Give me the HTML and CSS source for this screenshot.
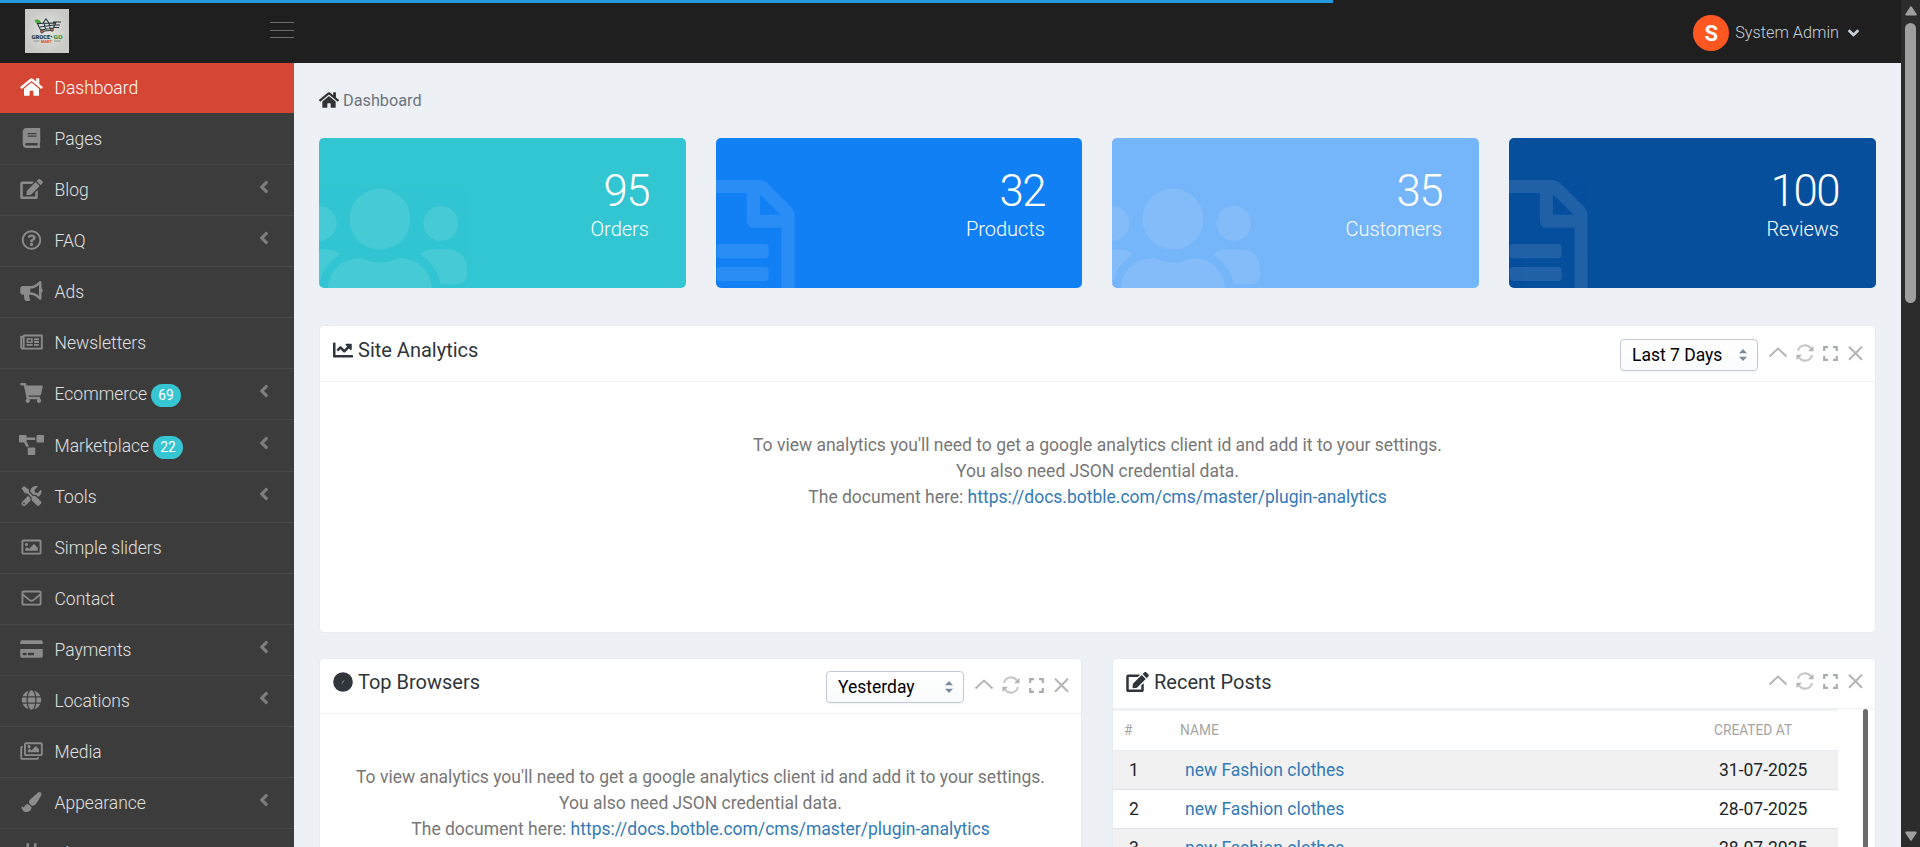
FILE: index.html
```html
<!DOCTYPE html>
<html lang="en">
<head>
<meta charset="utf-8">
<title>Dashboard</title>
<link rel="stylesheet" href="styles.css">
</head>
<body>
<svg class="sprite" aria-hidden="true">
  <symbol id="home" viewBox="0 0 576 512"><path d="M280.37 148.26L96 300.11V464a16 16 0 0 0 16 16l112.06-.29a16 16 0 0 0 15.92-16V368a16 16 0 0 1 16-16h64a16 16 0 0 1 16 16v95.64a16 16 0 0 0 16 16.05L464 480a16 16 0 0 0 16-16V300L295.67 148.26a12.19 12.19 0 0 0-15.3 0zM571.6 251.47L488 182.56V44.05a12 12 0 0 0-12-12h-56a12 12 0 0 0-12 12v72.61L318.47 43a48 48 0 0 0-61 0L4.34 251.47a12 12 0 0 0-1.6 16.9l25.5 31A12 12 0 0 0 45.15 301l235.22-193.74a12.19 12.19 0 0 1 15.3 0L530.9 301a12 12 0 0 0 16.9-1.6l25.5-31a12 12 0 0 0-1.7-16.93z"/></symbol>
  <symbol id="book" viewBox="0 0 448 512"><path d="M448 360V24c0-13.3-10.7-24-24-24H96C43 0 0 43 0 96v320c0 53 43 96 96 96h328c13.3 0 24-10.7 24-24v-16c0-7.5-3.5-14.3-8.9-18.7-4.2-15.4-4.2-59.3 0-74.7 5.4-4.3 8.9-11.1 8.9-18.6zM128 134c0-3.3 2.7-6 6-6h212c3.3 0 6 2.7 6 6v20c0 3.3-2.7 6-6 6H134c-3.3 0-6-2.7-6-6v-20zm0 64c0-3.3 2.7-6 6-6h212c3.3 0 6 2.7 6 6v20c0 3.3-2.7 6-6 6H134c-3.3 0-6-2.7-6-6v-20zm253.4 250H96c-17.7 0-32-14.3-32-32 0-17.6 14.4-32 32-32h285.4c-1.9 17.1-1.9 46.9 0 64z"/></symbol>
  <symbol id="edit" viewBox="0 0 576 512"><path d="M402.6 83.2l90.2 90.2c3.8 3.8 3.8 10 0 13.8L274.4 405.6l-92.8 10.3c-12.4 1.4-22.9-9.1-21.5-21.5l10.3-92.8L388.8 83.2c3.8-3.8 10-3.8 13.8 0zm162-22.9l-48.8-48.8c-15.2-15.2-39.9-15.2-55.2 0l-35.4 35.4c-3.8 3.8-3.8 10 0 13.8l90.2 90.2c3.8 3.8 10 3.8 13.8 0l35.4-35.4c15.2-15.3 15.2-40 0-55.2zM384 346.2V448H64V128h229.8c3.2 0 6.2-1.3 8.5-3.5l40-40c7.6-7.6 2.2-20.5-8.5-20.5H48C21.5 64 0 85.5 0 112v352c0 26.5 21.5 48 48 48h352c26.5 0 48-21.5 48-48V306.2c0-10.7-12.9-16-20.5-8.5l-40 40c-2.2 2.3-3.5 5.3-3.5 8.5z"/></symbol>
  <symbol id="question" viewBox="0 0 512 512"><path d="M256 8C119.043 8 8 119.083 8 256c0 136.997 111.043 248 248 248s248-111.003 248-248C504 119.083 392.957 8 256 8zm0 448c-110.532 0-200-89.431-200-200 0-110.495 89.472-200 200-200 110.491 0 200 89.471 200 200 0 110.53-89.431 200-200 200zm107.244-255.2c0 67.052-72.421 68.084-72.421 92.863V300c0 6.627-5.373 12-12 12h-45.647c-6.627 0-12-5.373-12-12v-8.659c0-35.745 27.1-50.034 47.579-61.516 17.561-9.845 28.324-16.541 28.324-29.579 0-17.246-21.999-28.693-39.784-28.693-23.189 0-33.894 10.977-48.942 29.969-4.057 5.12-11.46 6.071-16.666 2.124l-27.824-21.098c-5.107-3.872-6.251-11.066-2.644-16.363C184.846 131.491 214.94 112 261.794 112c49.071 0 101.45 38.304 101.45 88.8zM298 368c0 23.159-18.841 42-42 42s-42-18.841-42-42 18.841-42 42-42 42 18.841 42 42z"/></symbol>
  <symbol id="bullhorn" viewBox="0 0 576 512"><path d="M576 240c0-23.63-12.95-44.04-32-55.12V32.01C544 23.26 537.02 0 512 0c-7.12 0-14.19 2.38-19.98 7.02l-85.03 68.03C364.28 109.19 310.66 128 256 128H64c-35.35 0-64 28.65-64 64v96c0 35.35 28.65 64 64 64h33.7c-1.39 10.48-2.18 21.14-2.18 32 0 39.77 9.26 77.35 25.56 110.94 5.19 10.69 16.52 17.06 28.4 17.06h74.28c26.05 0 41.69-29.84 25.9-50.56-16.4-21.52-26.15-48.36-26.15-77.44 0-11.11 1.62-21.79 4.41-32H256c54.66 0 108.28 18.81 150.98 52.95l85.03 68.03a32.023 32.023 0 0 0 19.98 7.02c24.92 0 32-22.78 32-32V295.13C563.05 284.04 576 263.63 576 240zm-96 141.42l-33.05-26.44C392.95 311.78 325.12 288 256 288v-96c69.12 0 136.95-23.78 190.95-66.98L480 98.58v282.84z"/></symbol>
  <symbol id="newspaper" viewBox="0 0 576 512"><path d="M552 64H112c-20.858 0-38.643 13.377-45.248 32H24c-13.255 0-24 10.745-24 24v272c0 30.928 25.072 56 56 56h496c13.255 0 24-10.745 24-24V88c0-13.255-10.745-24-24-24zM48 392V144h16v248c0 4.411-3.589 8-8 8s-8-3.589-8-8zm480 8H111.422c.374-2.614.578-5.283.578-8V112h416v288zM172 280h136c6.627 0 12-5.373 12-12v-96c0-6.627-5.373-12-12-12H172c-6.627 0-12 5.373-12 12v96c0 6.627 5.373 12 12 12zm28-80h80v40h-80v-40zm-40 140v-24c0-6.627 5.373-12 12-12h136c6.627 0 12 5.373 12 12v24c0 6.627-5.373 12-12 12H172c-6.627 0-12-5.373-12-12zm192 0v-24c0-6.627 5.373-12 12-12h104c6.627 0 12 5.373 12 12v24c0 6.627-5.373 12-12 12H364c-6.627 0-12-5.373-12-12zm0-144v-24c0-6.627 5.373-12 12-12h104c6.627 0 12 5.373 12 12v24c0 6.627-5.373 12-12 12H364c-6.627 0-12-5.373-12-12zm0 72v-24c0-6.627 5.373-12 12-12h104c6.627 0 12 5.373 12 12v24c0 6.627-5.373 12-12 12H364c-6.627 0-12-5.373-12-12z"/></symbol>
  <symbol id="cart" viewBox="0 0 576 512"><path d="M528.12 301.319l47.273-208C578.806 78.301 567.391 64 551.99 64H159.208l-9.166-44.81C147.758 8.021 137.93 0 126.529 0H24C10.745 0 0 10.745 0 24v16c0 13.255 10.745 24 24 24h69.883l70.248 343.435C147.325 417.1 136 435.222 136 456c0 30.928 25.072 56 56 56s56-25.072 56-56c0-15.674-6.447-29.835-16.824-40h209.647C430.447 426.165 424 440.326 424 456c0 30.928 25.072 56 56 56s56-25.072 56-56c0-22.172-12.888-41.332-31.579-50.405l5.517-24.276c3.413-15.018-8.002-29.319-23.403-29.319H218.117l-6.545-32h293.145c11.206 0 20.92-7.754 23.403-18.681z"/></symbol>
  <symbol id="diagram" viewBox="0 0 640 512"><path d="M384 320H256c-17.67 0-32 14.33-32 32v128c0 17.67 14.33 32 32 32h128c17.67 0 32-14.33 32-32V352c0-17.67-14.33-32-32-32zM192 32c0-17.67-14.33-32-32-32H32C14.33 0 0 14.33 0 32v128c0 17.67 14.33 32 32 32h95.72l73.16 128.04C211.98 300.98 232.4 288 256 288h.28L192 175.51V128h224V64H192V32zM608 0H480c-17.67 0-32 14.33-32 32v128c0 17.67 14.33 32 32 32h128c17.67 0 32-14.33 32-32V32c0-17.67-14.33-32-32-32z"/></symbol>
  <symbol id="tools" viewBox="0 0 512 512"><path d="M501.1 395.7L384 278.6c-23.1-23.1-57.6-27.6-85.4-13.9L192 158.1V96L64 0 0 64l96 128h62.1l106.6 106.6c-13.6 27.8-9.2 62.3 13.9 85.4l117.1 117.1c14.6 14.6 38.2 14.6 52.7 0l52.7-52.7c14.5-14.6 14.5-38.2 0-52.7zM331.7 225c28.3 0 54.9 11 74.9 31l19.4 19.4c15.8-6.9 30.8-16.5 43.8-29.5 37.1-37.1 49.7-89.3 37.9-136.7-2.2-9-13.5-12.1-20.1-5.5l-74.4 74.4-67.9-11.3L334 98.9l74.4-74.4c6.6-6.6 3.4-17.9-5.7-20.2-47.4-11.7-99.6.9-136.6 37.9-28.5 28.5-41.9 66.1-41.2 103.6l82.1 82.1c8.1-1.9 16.5-2.9 24.7-2.9zm-103.9 82l-56.7-56.7L18.7 402.8c-25 25-25 65.5 0 90.5s65.5 25 90.5 0l123.6-123.6c-7.6-19.9-9.9-41.6-5-62.7zM64 472c-13.2 0-24-10.8-24-24 0-13.3 10.7-24 24-24s24 10.7 24 24c0 13.2-10.7 24-24 24z"/></symbol>
  <symbol id="image" viewBox="0 0 512 512"><path d="M464 64H48C21.49 64 0 85.49 0 112v288c0 26.51 21.49 48 48 48h416c26.51 0 48-21.49 48-48V112c0-26.51-21.49-48-48-48zm-6 336H54a6 6 0 0 1-6-6V118a6 6 0 0 1 6-6h404a6 6 0 0 1 6 6v276a6 6 0 0 1-6 6zM128 152c-22.091 0-40 17.909-40 40s17.909 40 40 40 40-17.909 40-40-17.909-40-40-40zM96 352h320v-80l-87.515-87.515c-4.686-4.686-12.284-4.686-16.971 0L192 304l-39.515-39.515c-4.686-4.686-12.284-4.686-16.971 0L96 304v48z"/></symbol>
  <symbol id="envelope" viewBox="0 0 512 512"><path d="M464 64H48C21.49 64 0 85.49 0 112v288c0 26.51 21.49 48 48 48h416c26.51 0 48-21.49 48-48V112c0-26.51-21.49-48-48-48zm0 48v40.805c-22.422 18.259-58.168 46.651-134.587 106.49-16.841 13.247-50.201 45.072-73.413 44.701-23.208.375-56.579-31.459-73.413-44.701C106.18 199.465 70.425 171.067 48 152.805V112h416zM48 400V214.398c22.914 18.251 55.409 43.862 104.938 82.646 21.857 17.205 60.134 55.186 103.062 54.955 42.717.231 80.509-37.199 103.053-54.947 49.528-38.783 82.032-64.401 104.947-82.653V400H48z"/></symbol>
  <symbol id="card" viewBox="0 0 576 512"><path d="M0 432c0 26.5 21.5 48 48 48h480c26.5 0 48-21.5 48-48V256H0v176zm192-68c0-6.6 5.4-12 12-12h136c6.6 0 12 5.4 12 12v40c0 6.6-5.4 12-12 12H204c-6.6 0-12-5.4-12-12v-40zm-128 0c0-6.6 5.4-12 12-12h72c6.6 0 12 5.4 12 12v40c0 6.6-5.4 12-12 12H76c-6.6 0-12-5.4-12-12v-40zM576 80v48H0V80c0-26.5 21.5-48 48-48h480c26.5 0 48 21.5 48 48z"/></symbol>
  <symbol id="globe" viewBox="0 0 496 512"><path d="M336.5 160C322 70.7 287.8 8 248 8s-74 62.7-88.5 152h177zM152 256c0 22.2 1.2 43.5 3.3 64h185.3c2.1-20.5 3.3-41.8 3.3-64s-1.2-43.5-3.3-64H155.3c-2.1 20.5-3.3 41.8-3.3 64zm324.7-96c-28.6-67.9-86.5-120.4-158-141.6 24.4 33.8 41.2 84.7 50 141.6h108zM177.2 18.4C105.8 39.6 47.8 92.1 19.3 160h108c8.7-56.9 25.5-107.8 49.9-141.6zM487.4 192H372.7c2.1 21 3.3 42.5 3.3 64s-1.2 43-3.3 64h114.6c5.5-20.5 8.6-41.8 8.6-64s-3.1-43.5-8.5-64zM120 256c0-21.5 1.2-43 3.3-64H8.6C3.2 212.5 0 233.8 0 256s3.2 43.5 8.6 64h114.6c-2-21-3.2-42.5-3.2-64zm39.5 96c14.5 89.3 48.7 152 88.5 152s74-62.7 88.5-152h-177zm159.3 141.6c71.4-21.2 129.4-73.7 158-141.6h-108c-8.8 56.9-25.6 107.8-50 141.6zM19.3 352c28.6 67.9 86.5 120.4 158 141.6-24.4-33.8-41.2-84.7-50-141.6h-108z"/></symbol>
  <symbol id="images" viewBox="0 0 576 512"><path d="M480 416v16c0 26.51-21.49 48-48 48H48c-26.51 0-48-21.49-48-48V176c0-26.51 21.49-48 48-48h16v48H54a6 6 0 0 0-6 6v244a6 6 0 0 0 6 6h372a6 6 0 0 0 6-6v-10h48zm42-336H150a6 6 0 0 0-6 6v244a6 6 0 0 0 6 6h372a6 6 0 0 0 6-6V86a6 6 0 0 0-6-6zm6-48c26.51 0 48 21.49 48 48v256c0 26.51-21.49 48-48 48H144c-26.51 0-48-21.49-48-48V80c0-26.51 21.49-48 48-48h384zM264 144c0 22.091-17.909 40-40 40s-40-17.909-40-40 17.909-40 40-40 40 17.909 40 40zm-72 96l39.515-39.515c4.686-4.686 12.284-4.686 16.971 0L288 240l103.515-103.515c4.686-4.686 12.284-4.686 16.971 0L480 208v80H192v-48z"/></symbol>
  <symbol id="brush" viewBox="0 0 512 512"><path d="M167.02 309.34c-40.12 2.58-76.53 17.86-97.19 72.3-2.35 6.21-8 9.98-14.59 9.98-11.11 0-45.46-27.67-55.25-34.35C0 439.62 37.93 512 128 512c75.86 0 128-43.77 128-120.19 0-3.11-.65-6.08-.97-9.13l-88.01-73.34zM457.89 0c-15.16 0-29.37 6.71-40.21 16.45C213.27 199.05 192 203.34 192 257.09c0 13.7 3.25 26.76 8.73 38.7l63.82 53.18c7.21 1.8 14.64 3.03 22.39 3.03 62.11 0 98.11-45.47 211.16-256.46 7.38-14.35 13.9-29.85 13.9-45.99C512 20.64 486 0 457.89 0z"/></symbol>
  <symbol id="plug" viewBox="0 0 384 512"><path d="M320,32a32,32,0,0,0-64,0v96h64Zm48,128H16A16,16,0,0,0,0,176v32a16,16,0,0,0,16,16H32v32A160.07,160.07,0,0,0,160,412.8V512h64V412.8A160.07,160.07,0,0,0,352,256V224h16a16,16,0,0,0,16-16V176A16,16,0,0,0,368,160ZM128,32a32,32,0,0,0-64,0v96h64Z"/></symbol>
  <symbol id="users" viewBox="0 0 640 512"><path d="M96 224c35.3 0 64-28.7 64-64s-28.7-64-64-64-64 28.7-64 64 28.7 64 64 64zm448 0c35.3 0 64-28.7 64-64s-28.7-64-64-64-64 28.7-64 64 28.7 64 64 64zm32 32h-64c-17.6 0-33.5 7.1-45.1 18.6 40.3 22.1 68.9 62 75.1 109.4h66c17.7 0 32-14.3 32-32v-32c0-35.3-28.7-64-64-64zm-256 0c61.9 0 112-50.1 112-112S381.9 32 320 32 208 82.1 208 144s50.1 112 112 112zm76.8 32h-8.3c-20.8 10-43.9 16-68.5 16s-47.6-6-68.5-16h-8.3C179.6 288 128 339.6 128 403.2V432c0 26.5 21.5 48 48 48h288c26.5 0 48-21.5 48-48v-28.8c0-63.6-51.6-115.2-115.2-115.2zm-223.7-13.4C161.5 263.1 145.6 256 128 256H64c-35.3 0-64 28.7-64 64v32c0 17.7 14.3 32 32 32h65.9c6.3-47.4 34.9-87.3 75.2-109.4z"/></symbol>
  <symbol id="file" viewBox="0 0 384 512"><path d="M288 248v28c0 6.6-5.4 12-12 12H108c-6.6 0-12-5.4-12-12v-28c0-6.6 5.4-12 12-12h168c6.6 0 12 5.4 12 12zm-12 72H108c-6.6 0-12 5.4-12 12v28c0 6.6 5.4 12 12 12h168c6.6 0 12-5.4 12-12v-28c0-6.6-5.4-12-12-12zm108-188.1V464c0 26.5-21.5 48-48 48H48c-26.5 0-48-21.5-48-48V48C0 21.5 21.5 0 48 0h204.1C264.8 0 277 5.1 286 14.1L369.9 98c9 8.9 14.1 21.2 14.1 33.9zm-128-80V128h76.1L256 51.9zM336 464V176H232c-13.3 0-24-10.7-24-24V48H48v416h288z"/></symbol>
  <symbol id="chart" viewBox="0 0 512 512"><path d="M496 384H64V80c0-8.84-7.16-16-16-16H16C7.16 64 0 71.16 0 80v336c0 17.67 14.33 32 32 32h464c8.84 0 16-7.16 16-16v-32c0-8.84-7.16-16-16-16zM464 96H345.94c-21.38 0-32.09 25.85-16.97 40.97l32.4 32.4L288 242.75l-73.37-73.37c-12.5-12.5-32.76-12.5-45.25 0l-68.69 68.69c-6.25 6.25-6.25 16.38 0 22.63l22.62 22.62c6.25 6.25 16.38 6.25 22.63 0L192 237.25l73.37 73.37c12.5 12.5 32.76 12.5 45.25 0l96-96 32.4 32.4c15.12 15.12 40.97 4.41 40.97-16.97V112c.01-8.84-7.15-16-15.99-16z"/></symbol>
  <symbol id="compass" viewBox="0 0 20 20"><circle cx="10" cy="10" r="9.8"/><circle cx="10" cy="10" r="8" fill="none" stroke="#4a525a" stroke-width=".5" stroke-dasharray=".5 1.6"/><path d="M8.4 12.4l1-2.6 2.3-2.4-1.1 2.7z" fill="#8a9096"/></symbol>
  <symbol id="angle-left" viewBox="0 0 256 512"><path d="M31.7 239l136-136c9.4-9.4 24.6-9.4 33.9 0l22.6 22.6c9.4 9.4 9.4 24.6 0 33.9L127.9 256l96.4 96.4c9.4 9.4 9.4 24.6 0 33.9L201.7 409c-9.4 9.4-24.6 9.4-33.9 0l-136-136c-9.5-9.4-9.5-24.6-.1-34z"/></symbol>
  <symbol id="angle-down" viewBox="0 0 320 512"><path d="M143 352.3L7 216.3c-9.4-9.4-9.4-24.6 0-33.9l22.6-22.6c9.4-9.4 24.6-9.4 33.9 0l96.4 96.4 96.4-96.4c9.4-9.4 24.6-9.4 33.9 0l22.6 22.6c9.4 9.4 9.4 24.6 0 33.9l-136 136c-9.2 9.4-24.4 9.4-33.8 0z"/></symbol>
  <symbol id="tools-strip" viewBox="0 0 96 18">
    <g fill="none" stroke="#b5b5b5" stroke-width="2">
      <path d="M1.5 12.5L10 4.5l8.500 8"/>
      <path d="M30 7a7.200 7.200 0 0 1 13-2.400M44 11a7.200 7.200 0 0 1-13 2.400" stroke="#c6c6c6"/>
      <path d="M56.200 7V3.200H60M65 3.200h3.800V7M68.800 12v3.800H65M60 15.800h-3.800V12" stroke="#a9adb2" stroke-width="2.200"/>
      <path d="M81 2.700L94 15.700M94 2.700L81 15.700"/>
    </g>
    <path d="M45.500 2v5.200h-5.500zM28.500 10.800H34l-5.500 5.200z" fill="#b3b3b3"/>
  </symbol>
</svg>

<div class="screen">
  <div class="progress"></div>
  <div class="app">
    <header class="topbar">
      <div class="brand">
        <svg class="logo" viewBox="0 0 44 44">
          <defs><radialGradient id="glow"><stop offset="0" stop-color="#e4e5e2"/><stop offset="1" stop-color="#c9cac5"/></radialGradient></defs>
          <rect width="44" height="44" fill="url(#glow)"/>
          <path d="M9.500 11c3-1.400 6-.5 7 4-3.500.3-6-.5-7-4z" fill="#4aa83a"/>
          <path d="M12.500 14.500l3 6.500 13 -2 2-5zM18 14l3-4 3 4M15 18l14-2M19 14l1.500 6M24 14l1 5.500M28 13h8M30 16h5M29 18.500h5M16 22.500l12-1.500" fill="none" stroke="#24343a" stroke-width="1.100"/>
          <circle cx="17" cy="22.500" r="1.500" fill="#d8673a" stroke="#24343a" stroke-width=".7"/><circle cx="27" cy="20.800" r="1.500" fill="#d8673a" stroke="#24343a" stroke-width=".7"/>
          <text x="6.500" y="30" class="logo-name" textLength="21" lengthAdjust="spacingAndGlyphs">GROCE•</text>
          <text x="28.500" y="30" class="logo-go" textLength="9" lengthAdjust="spacingAndGlyphs">GO</text>
          <path d="M8.500 32h6M29 32h6.500" stroke="#8e938f" stroke-width="1"/>
          <text x="16" y="33.500" class="logo-mart" textLength="11" lengthAdjust="spacingAndGlyphs">MART</text>
        </svg>
        <svg class="burger" viewBox="0 0 24 18"><path d="M0 1.500h24M0 9.500h24M0 16.500h24" stroke="#6c6c6c"/></svg>
      </div>
      <div class="user"><span class="avatar">S</span><span>System Admin</span><svg class="caret" fill="#c6cfda"><use href="#angle-down"/></svg></div>
    </header>
    <div class="body">
      <nav class="menu">
        <a class="item active"><svg class="ico"><use href="#home"/></svg>Dashboard</a>
        <a class="item shifted"><svg class="ico"><use href="#book"/></svg>Pages</a>
        <a class="item"><svg class="ico"><use href="#edit"/></svg>Blog<svg class="arrow"><use href="#angle-left"/></svg></a>
        <a class="item"><svg class="ico"><use href="#question"/></svg>FAQ<svg class="arrow"><use href="#angle-left"/></svg></a>
        <a class="item"><svg class="ico"><use href="#bullhorn"/></svg>Ads</a>
        <a class="item"><svg class="ico"><use href="#newspaper"/></svg>Newsletters</a>
        <a class="item"><svg class="ico"><use href="#cart"/></svg>Ecommerce<span class="badge">69</span><svg class="arrow"><use href="#angle-left"/></svg></a>
        <a class="item shifted"><svg class="ico"><use href="#diagram"/></svg>Marketplace<span class="badge">22</span><svg class="arrow"><use href="#angle-left"/></svg></a>
        <a class="item"><svg class="ico"><use href="#tools"/></svg>Tools<svg class="arrow"><use href="#angle-left"/></svg></a>
        <a class="item"><svg class="ico"><use href="#image"/></svg>Simple sliders</a>
        <a class="item"><svg class="ico"><use href="#envelope"/></svg>Contact</a>
        <a class="item"><svg class="ico"><use href="#card"/></svg>Payments<svg class="arrow"><use href="#angle-left"/></svg></a>
        <a class="item"><svg class="ico"><use href="#globe"/></svg>Locations<svg class="arrow"><use href="#angle-left"/></svg></a>
        <a class="item"><svg class="ico"><use href="#images"/></svg>Media</a>
        <a class="item"><svg class="ico"><use href="#brush"/></svg>Appearance<svg class="arrow"><use href="#angle-left"/></svg></a>
        <a class="item"><svg class="ico"><use href="#plug"/></svg>Plugins</a>
      </nav>
      <main class="content">
        <div class="crumb"><svg class="crumb-ico"><use href="#home"/></svg>Dashboard</div>
        <section class="stats">
          <div class="stat teal"><svg class="mark users"><use href="#users"/></svg><b>95</b><span>Orders</span></div>
          <div class="stat blue"><svg class="mark file"><use href="#file"/></svg><b>32</b><span>Products</span></div>
          <div class="stat sky"><svg class="mark users"><use href="#users"/></svg><b>35</b><span>Customers</span></div>
          <div class="stat navy"><svg class="mark file"><use href="#file"/></svg><b>100</b><span>Reviews</span></div>
        </section>
        <section class="panel analytics">
          <div class="head">
            <h2><svg class="chart"><use href="#chart"/></svg>Site Analytics</h2>
            <div class="actions"><span class="select">Last 7 Days<svg viewBox="0 0 8 12"><path d="M4 0l4 4.300H0zM4 12l4-4.300H0z"/></svg></span><svg class="strip"><use href="#tools-strip"/></svg></div>
          </div>
          <p class="note">To view analytics you'll need to get a google analytics client id and add it to your settings.<br>You also need JSON credential data.<br>The document here: <a>https://docs.botble.com/cms/master/plugin-analytics</a></p>
        </section>
        <section class="pair">
          <div class="panel">
            <div class="head lower">
              <h2><svg class="compass"><use href="#compass"/></svg>Top Browsers</h2>
              <div class="actions"><span class="select">Yesterday<svg viewBox="0 0 8 12"><path d="M4 0l4 4.300H0zM4 12l4-4.300H0z"/></svg></span><svg class="strip"><use href="#tools-strip"/></svg></div>
            </div>
            <p class="note">To view analytics you'll need to get a google analytics client id and add it to your settings.<br>You also need JSON credential data.<br>The document here: <a>https://docs.botble.com/cms/master/plugin-analytics</a></p>
          </div>
          <div class="panel">
            <div class="head lower short">
              <h2><svg class="edit"><use href="#edit"/></svg>Recent Posts</h2>
              <div class="actions"><svg class="strip"><use href="#tools-strip"/></svg></div>
            </div>
            <div class="posts">
              <div class="table">
                <div class="row labels"><span>#</span><span>NAME</span><span>CREATED AT</span></div>
                <div class="row odd"><span>1</span><a>new Fashion clothes</a><span>31-07-2025</span></div>
                <div class="row"><span>2</span><a>new Fashion clothes</a><span>28-07-2025</span></div>
                <div class="row odd"><span>3</span><a>new Fashion clothes</a><span>28-07-2025</span></div>
              </div>
              <div class="inner-bar"></div>
            </div>
          </div>
        </section>
      </main>
    </div>
  </div>
  <aside class="scroll">
    <svg class="tri" viewBox="0 0 12 10"><path d="M5.200.8q.8-1 1.600 0L11.600 8q.5 1.500-1 1.500H1.400Q0 9.500.4 8z"/></svg>
    <div class="thumb"></div>
    <svg class="tri end" viewBox="0 0 12 10"><path d="M5.200 9.200q.8 1 1.600 0L11.600 2q.5-1.500-1-1.500H1.400Q0 .5.4 2z"/></svg>
  </aside>
</div>
</body>
</html>
```
FILE: styles.css
```css
* { box-sizing: border-box; }
body { margin: 0; height: 847px; overflow: hidden; font-family: Roboto, "Liberation Sans", sans-serif; font-size: 17.5px; color: #212529; background: #edf0f5; }
.sprite { position: absolute; width: 0; height: 0; }
.screen { display: flex; height: 847px; position: relative; }
.progress { position: absolute; left: 0; top: 0; width: 1333px; height: 3px; background: #2299dd; z-index: 2; }
.app { flex: 1; min-width: 0; display: flex; flex-direction: column; }

.topbar { height: 63px; flex: none; background: #1f1f1f; display: flex; justify-content: space-between; padding-right: 42px; }
.brand { width: 294px; display: flex; justify-content: space-between; align-items: flex-start; padding: 9px 0 0 25px; }
.logo { width: 44px; height: 44px; display: block; }
.logo-name, .logo-go, .logo-mart { font-family: Roboto, sans-serif; font-weight: 900; font-size: 6px; fill: #24343a; }
.logo-go { fill: #3c8f38; }
.logo-mart { font-size: 3.2px; fill: #d8572e; }
.burger { width: 24px; height: 18px; margin-top: 12px; }
.user { display: flex; align-items: center; padding-top: 3px; font-size: 16.25px; font-weight: 300; color: #c6cfda; line-height: 20px; }
.avatar { width: 36px; height: 36px; margin-right: 6px; border-radius: 50%; background: #ff5722; color: #fff; font-size: 22px; font-weight: 700; line-height: 37px; text-align: center; }
.caret { width: 11px; height: 18px; margin-left: 9px; }

.body { flex: 1; min-height: 0; display: flex; overflow: hidden; }
.menu { width: 294px; flex: none; background: #3c3c3c; overflow: hidden; }
.item { display: flex; align-items: center; height: 51px; padding: 0 25px 0 16px; border-bottom: 1px solid #484848; color: #e0e0e0; font-size: 17.5px; font-weight: 300; line-height: 24px; }
.item.shifted { height: 52px; padding-top: 1px; }
.item.active { height: 50px; border: 0; background: #d64635; color: #fff; }
.ico { width: 31px; height: 20px; margin: -3px 7.5px 0 0; fill: #8b8b8b; flex: none; }
.active .ico { fill: #fff; }
.arrow { width: 10px; height: 20px; margin: -6px 0 0 auto; fill: #7d7d7d; }
.badge { height: 23px; padding: 0 7.2px; margin: 3px 0 0 4px; border-radius: 12px; background: #36c6d3; color: #fff; font-size: 13.8px; font-weight: 400; line-height: 23px; }

.content { flex: 1; min-width: 0; padding: 0 25px; }
.crumb { display: flex; align-items: center; height: 75px; font-size: 16.25px; color: #6c757d; }
.crumb-ico { width: 20px; height: 18px; margin: -2px 4px 0 0; fill: #333; }

.stats { display: grid; grid-template-columns: 367px 366px 367px 367px; gap: 30px; }
.stat { position: relative; overflow: hidden; height: 150px; padding: 31px 37px 0 0; border-radius: 5px; color: #fff; text-align: right; display: flex; flex-direction: column; font-weight: 300; }
.stat b { font-size: 43.75px; line-height: 44px; font-weight: 300; letter-spacing: -1.5px; }
.stat span { font-size: 20px; line-height: 32px; }
.teal { background: #32c5d2; }
.blue { background: #1280f5; }
.sky { background: #75b5f9; }
.navy { background: #064f9d; }
.mark { position: absolute; left: -26px; top: 42px; height: 139px; fill: #fff; opacity: .1; }
.users { width: 174px; }
.file { width: 105px; }

.panel { background: #fff; border: 1px solid #e7ecf1; border-radius: 5px; min-width: 0; overflow: hidden; }
.analytics { height: 308px; margin-top: 37px; }
.head { height: 56px; display: flex; justify-content: space-between; padding: 12px 11px 0 13px; border-bottom: 1px solid #eef1f5; }
.head.lower { height: 55px; padding-top: 11px; }
.head.short { height: 50px; }
.head h2 { margin: 0; display: flex; align-items: center; height: 24px; font-size: 20px; font-weight: 400; line-height: 24px; color: #2f353b; }
.head h2 svg { fill: #2f353b; margin-right: 5px; }
.chart { width: 20px; height: 20px; }
.compass { width: 20px; height: 20px; }
.edit { width: 23px; height: 20px; }
.actions { display: flex; align-items: flex-start; gap: 10px; padding-top: 1px; }
.lower .actions { padding-top: 0; }
.short .actions { padding-top: 2px; }
.select { width: 138px; height: 32px; display: flex; justify-content: space-between; align-items: center; padding: 0 10px 0 11px; border: 1px solid #c2cad8; border-radius: 4px; background: linear-gradient(#fff, #fafbfc); box-shadow: 0 1px 2px #0000000d; color: #000; font-size: 17.5px; }
.select svg { width: 8px; height: 12px; fill: #788a9c; }
.strip { width: 96px; height: 18px; margin-top: 5px; }
.lower .strip { margin-top: 6px; }
.lower .select { margin-top: 1px; }
.short .strip { margin-top: 0; }
.note { margin: 50px 0 0; text-align: center; line-height: 26px; color: #777; }
a { color: #337ab7; }

.pair { display: grid; grid-template-columns: 763px 764px; gap: 30px; margin-top: 25px; height: 300px; }
.posts { display: flex; justify-content: space-between; padding-right: 7px; height: 250px; }
.table { width: 725px; }
.row { display: grid; grid-template-columns: 56px 534px 1fr; height: 39px; padding-left: 16px; align-items: center; border-bottom: 1px solid #dee2e6; }
.row.odd { background: #f1f1f1; }
.row.labels { height: 42px; padding: 0 0 2px 11px; border-top: 2px solid #eef1f5; border-bottom-color: #e7ecf1; font-size: 13.75px; color: #a5a5a5; }
.inner-bar { width: 5px; height: 250px; background: #6b6b6b; border-radius: 3px; }

.scroll { width: 19px; flex: none; background: #2c2c2c; display: flex; flex-direction: column; align-items: center; padding: 6px 0 6px; }
.tri { width: 12px; height: 10px; fill: #9f9f9f; flex: none; }
.thumb { width: 11px; height: 280px; margin-top: 7px; border-radius: 6px; background: #9f9f9f; }
.end { margin-top: auto; }
```
